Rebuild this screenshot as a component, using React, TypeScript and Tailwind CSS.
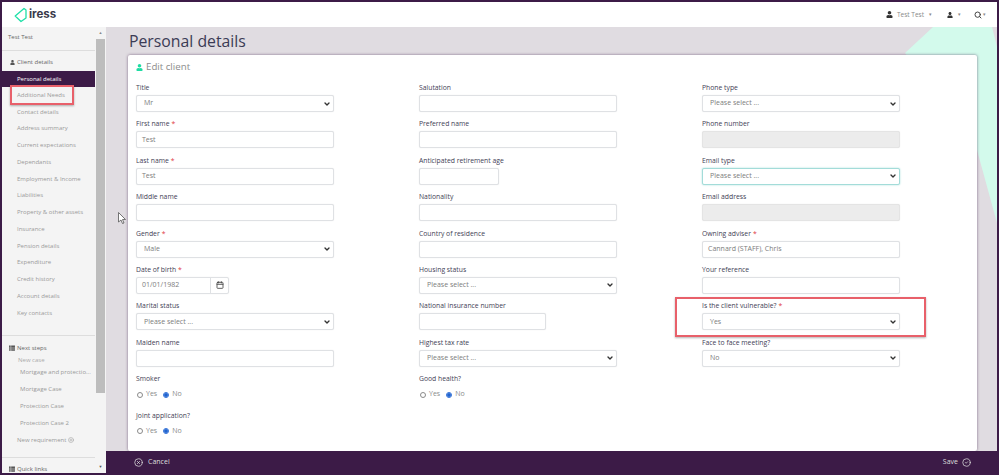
import { ChevronDown, Calendar, Search, CircleX, CircleCheck, CirclePlus } from 'lucide-react';
import { FaUser, FaThList } from 'react-icons/fa';

type Field = {
  label: string;
  req?: boolean;
  kind?: 'input' | 'select' | 'radio' | 'date';
  value?: string;
  width?: string;
  disabled?: boolean;
  focus?: boolean;
};

const col1: Field[] = [
  { label: 'Title', kind: 'select', value: 'Mr' },
  { label: 'First name', req: true, value: 'Test' },
  { label: 'Last name', req: true, value: 'Test' },
  { label: 'Middle name' },
  { label: 'Gender', req: true, kind: 'select', value: 'Male' },
  { label: 'Date of birth', req: true, kind: 'date', value: '01/01/1982' },
  { label: 'Marital status', kind: 'select', value: 'Please select ...' },
  { label: 'Maiden name' },
  { label: 'Smoker', kind: 'radio' },
  { label: 'Joint application?', kind: 'radio' },
];

const col2: Field[] = [
  { label: 'Salutation' },
  { label: 'Preferred name' },
  { label: 'Anticipated retirement age', width: 'w-[80px]' },
  { label: 'Nationality' },
  { label: 'Country of residence' },
  { label: 'Housing status', kind: 'select', value: 'Please select ...' },
  { label: 'National insurance number', width: 'w-[127px]' },
  { label: 'Highest tax rate', kind: 'select', value: 'Please select ...' },
  { label: 'Good health?', kind: 'radio' },
];

const col3: Field[] = [
  { label: 'Phone type', kind: 'select', value: 'Please select ...' },
  { label: 'Phone number', disabled: true },
  { label: 'Email type', kind: 'select', value: 'Please select ...', focus: true },
  { label: 'Email address', disabled: true },
  { label: 'Owning adviser', req: true, value: 'Cannard (STAFF), Chris' },
  { label: 'Your reference' },
  { label: 'Is the client vulnerable?', req: true, kind: 'select', value: 'Yes' },
  { label: 'Face to face meeting?', kind: 'select', value: 'No' },
];

const clientLinks = [
  'Additional Needs',
  'Contact details',
  'Address summary',
  'Current expectations',
  'Dependants',
  'Employment & Income',
  'Liabilities',
  'Property & other assets',
  'Insurance',
  'Pension details',
  'Expenditure',
  'Credit history',
  'Account details',
  'Key contacts',
];

const caseLinks = ['Mortgage and protectio...', 'Mortgage Case', 'Protection Case', 'Protection Case 2'];

function Radio({ on, label }: { on?: boolean; label: string }) {
  return (
    <span className="flex items-center gap-[3px]">
      <span className={`flex h-[6px] w-[6px] items-center justify-center rounded-full border-[0.75px] bg-white ${on ? 'border-[#2f6fd6]' : 'border-[#8a8a8a]'}`}>
        {on && <span className="h-[4px] w-[4px] rounded-full bg-[#1f63d0]" />}
      </span>
      <span className="text-[#8b8b8b]">{label}</span>
    </span>
  );
}

function Control({ field }: { field: Field }) {
  const kind = field.kind ?? 'input';
  if (kind === 'radio') {
    return (
      <div className="flex h-[17px] items-center gap-[6px] pl-[1px]">
        <Radio label="Yes" />
        <Radio label="No" on />
      </div>
    );
  }
  if (kind === 'date') {
    return (
      <div className="flex h-[17px] w-[93px] rounded-[2px] border border-[#dfe1e4] text-[#7c7c7c] shadow-[0_0_1px_rgba(0,0,0,0.12)]">
        <span className="flex flex-1 items-center pl-[5px]">{field.value}</span>
        <span className="flex w-[18px] items-center justify-center border-l border-[#dfe1e4]">
          <Calendar size={8} strokeWidth={2.5} className="text-[#444]" />
        </span>
      </div>
    );
  }
  return (
    <div
      className={`flex h-[17px] items-center justify-between rounded-[2px] border pl-[5px] pr-[2px] text-[#7c7c7c] ${field.width ?? 'w-[198px]'} ${
        field.disabled ? 'border-[#e4e4e4] bg-[#ececec]' : 'bg-white'
      } ${field.focus ? 'border-[#a3dcd9] shadow-[0_0_2px_#a3dcd9]' : 'border-[#dfe1e4] shadow-[0_0_1px_rgba(0,0,0,0.12)]'}`}
    >
      <span className={kind === 'select' ? 'pl-[2px]' : ''}>{field.value}</span>
      {kind === 'select' && <ChevronDown size={8} strokeWidth={4} className="text-[#333]" />}
    </div>
  );
}

function Column({ fields, width }: { fields: Field[]; width: string }) {
  return (
    <div className={`flex shrink-0 flex-col ${width}`}>
      {fields.map((f) => (
        <div key={f.label} className="h-[36.4px]">
          <div className="flex h-[13px] items-start text-[6.8px] leading-[11px] text-[#3f4256]">
            {f.label}
            {f.req && <span className="ml-[2px] text-[#e0393e]">*</span>}
          </div>
          <Control field={f} />
        </div>
      ))}
    </div>
  );
}

export default function App() {
  return (
    <div className="relative flex h-[475px] w-[999px] flex-col overflow-hidden border-2 border-[#3c1b47] bg-white font-['Open_Sans',sans-serif] text-[7px]">
      <header className="flex h-[25px] shrink-0 items-center justify-between bg-white pl-[12px] pr-[11px]">
        <div className="flex items-center gap-[1px]">
          <svg width="14" height="16" viewBox="0 0 14 16" fill="none">
            <path d="M10 1.5 L1.2 9 L7 14.5 L12 11 L12 3 Z" stroke="#1fe0a8" strokeWidth="1.3" strokeLinejoin="round" />
          </svg>
          <span className="font-['Inter',sans-serif] text-[11.5px] font-bold leading-none text-[#3a3a4a]">iress</span>
        </div>
        <div className="flex items-center text-[6.5px] text-[#8a8a8a]">
          <FaUser size={7} className="mr-[4px] text-[#333]" />
          <span>Test Test</span>
          <span className="ml-[5px] mr-[15px] text-[5px]">▾</span>
          <FaUser size={6} className="text-[#333]" />
          <span className="ml-[5px] mr-[13px] text-[5px]">▾</span>
          <Search size={8} strokeWidth={3} className="text-[#444]" />
          <span className="ml-[1px] text-[5px]">▾</span>
        </div>
      </header>

      <div className="flex min-h-0 flex-1">
        <aside className="flex w-[104px] shrink-0">
          <nav className="flex w-[93px] flex-col overflow-hidden bg-[#f4f4f4] text-[6px] text-[#9a9a9a]">
            <div className="h-[24px] shrink-0 border-b border-[#dddddd] pl-[6px] pt-[5px] text-[6px] leading-[10px] text-[#666]">Test Test</div>
            <div className="flex h-[20px] shrink-0 items-end gap-[2px] pb-[4px] pl-[8px] leading-[9px] text-[#666]">
              <FaUser size={5} className="mb-[2px] text-[#555]" />
              Client details
            </div>
            <div className="flex h-[16px] shrink-0 items-center bg-[#3c1b47] pl-[15px] text-white">Personal details</div>
            <ul className="flex shrink-0 flex-col">
              {clientLinks.map((l) => (
                <li key={l} className="flex h-[16.75px] items-center pl-[15px]">
                  {l}
                </li>
              ))}
            </ul>
            <div className="mt-[13.5px] shrink-0 border-t border-[#dddddd] pl-[7px] pt-[7.5px]">
              <div className="flex items-center gap-[2px] leading-[9px] text-[#666]">
                <FaThList size={6} className="text-[#555]" />
                Next steps
              </div>
              <div className="pl-[9px] pt-[3px] leading-[9px] text-[#aaa]">New case</div>
            </div>
            <ul className="flex shrink-0 flex-col pl-[18px]">
              {caseLinks.map((l) => (
                <li key={l} className="flex h-[16.75px] items-center whitespace-nowrap">
                  {l}
                </li>
              ))}
            </ul>
            <div className="flex h-[17px] shrink-0 items-center gap-[2px] pl-[15px]">
              New requirement
              <CirclePlus size={6} />
            </div>
            <div className="mt-[8.5px] flex shrink-0 items-center gap-[2px] border-t border-[#dddddd] pl-[7px] pt-[6.5px] leading-[9px] text-[#666]">
              <FaThList size={6} className="text-[#555]" />
              Quick links
            </div>
          </nav>
          <div className="flex w-[11px] flex-col bg-[#f4f4f4]">
            <div className="flex h-[12px] items-center justify-center text-[4px] text-[#888]">▲</div>
            <div className="mx-[1px] h-[354px] bg-[#bdbdbd]" />
            <div className="mt-auto flex h-[12px] items-center justify-center text-[4px] text-[#555]">▼</div>
          </div>
        </aside>

        <main className="relative flex min-w-0 flex-1 flex-col overflow-hidden bg-[#e0dce1]">
          {/* mint shape behind the card */}
          <svg className="absolute inset-0" width="893" height="446" viewBox="0 0 893 446">
            <path d="M799 26 L827 0 L886 0 L891 20 L891 196 L871 123 Z" fill="#d3faec" />
          </svg>
          <h1 className="relative h-[28px] pl-[23px] pt-[3px] text-[15.8px] leading-[22px] text-[#3b3b55]">Personal details</h1>
          <section className="relative ml-[22px] mr-[20px] flex-1 rounded-[2px] bg-white pl-[8px] shadow-[0_0_3px_rgba(60,27,71,0.6)]">
            <div className="flex h-[25px] items-center gap-[3px] text-[9.7px] text-[#8c8c8c]">
              <FaUser size={7} className="text-[#1fdca3]" />
              Edit client
            </div>
            <div className="flex pt-[2px]">
              <Column fields={col1} width="w-[283px]" />
              <Column fields={col2} width="w-[283px]" />
              <Column fields={col3} width="w-[198px]" />
            </div>
          </section>
          <footer className="relative flex h-[22px] shrink-0 items-center justify-between bg-[#3c1b47] pl-[28px] pr-[26px] text-[#dddddd]">
            <span className="flex items-center gap-[5px]">
              <CircleX size={9} />
              Cancel
            </span>
            <span className="flex items-center gap-[4px]">
              Save
              <CircleCheck size={9} />
            </span>
          </footer>
        </main>
      </div>

      {/* annotation boxes drawn over the screenshot */}
      <div className="absolute left-[8px] top-[83px] h-[20px] w-[64px] border-2 border-[#e8606a] shadow-[0_1px_2px_rgba(0,0,0,0.3)]" />
      <div className="absolute left-[673px] top-[295px] h-[40px] w-[251px] border-2 border-[#e8606a] shadow-[0_1px_2px_rgba(0,0,0,0.3)]" />
      {/* mouse pointer */}
      <svg className="absolute left-[116px] top-[210px]" width="8" height="12" viewBox="0 0 8 12" fill="#fff" stroke="#555" strokeWidth="0.8">
        <path d="M0.5 0.5 L0.5 10 L3 8 L4.5 11.5 L6 11 L4.5 7.5 L7.5 7.5 Z" />
      </svg>
    </div>
  );
}
